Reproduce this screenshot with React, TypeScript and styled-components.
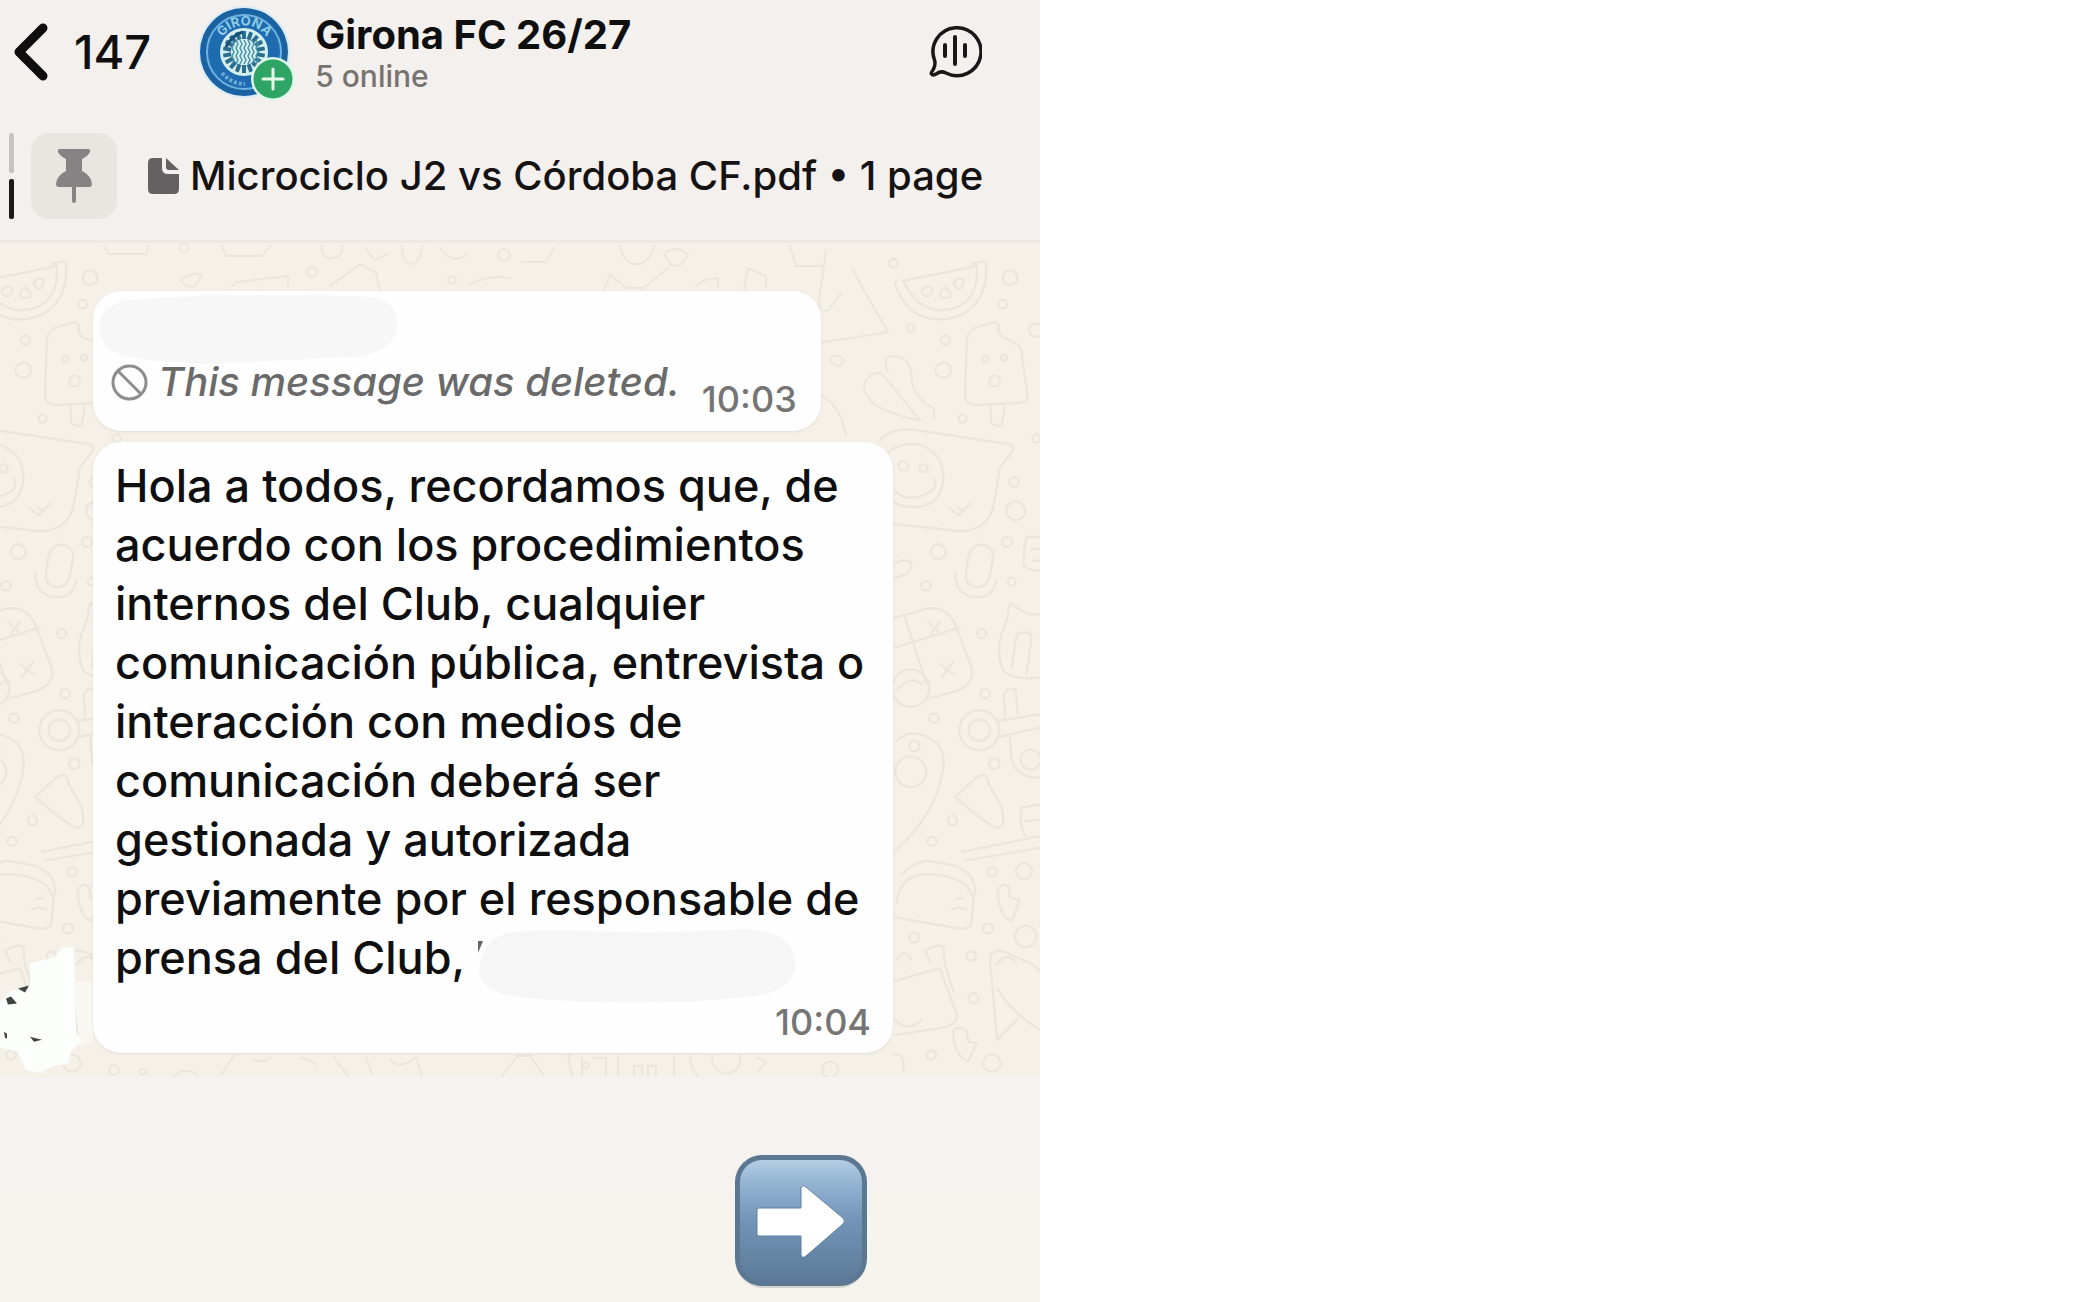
import React from "react";
import styled, { createGlobalStyle } from "styled-components";

const GlobalStyle = createGlobalStyle`
  *, *::before, *::after { box-sizing: border-box; }
  body { margin: 0; background: #fff; font-family: Inter, "Liberation Sans", sans-serif; color: #0f0f0f; }
  button { font: inherit; color: inherit; background: none; border: 0; padding: 0; cursor: pointer; }
  h1, p { margin: 0; }
  svg { display: block; flex: none; }
`;

const Screen = styled.main`
  display: flex;
  flex-direction: column;
  width: 50%;
  min-height: 100vh;
  background: #f5f2ee;
`;

const Header = styled.header`
  display: flex;
  align-items: center;
  padding: 3px 58px 9px 12px;
  background: #f3f0ed;
`;

const BackButton = styled.button`
  display: flex;
  align-items: center;
  gap: 22px;
  font-size: 47px;
  line-height: 56px;
  font-weight: 500;
`;

const Avatar = styled.div`
  margin-left: 48px;
`;

const Heading = styled.div`
  flex: 1;
  margin-left: 20px;
  padding-top: 4px;
`;

const Title = styled.h1`
  font-size: 40px;
  line-height: 44px;
  font-weight: 700;
`;

const Presence = styled.p`
  font-size: 30px;
  line-height: 38px;
  font-weight: 500;
  color: #77736f;
`;

const PinnedBar = styled.section`
  display: flex;
  align-items: center;
  padding: 23px 0 21px 9px;
  background: #f4f0ee;
  border-bottom: 3px solid #ece8e3;
`;

const PinSteps = styled.div`
  display: flex;
  flex-direction: column;
  gap: 6px;
`;

const PinStep = styled.span<{ $active?: boolean }>`
  width: 5px;
  height: 40px;
  border-radius: 2px;
  background: ${(p) => (p.$active ? "#1c1917" : "#c6c3c0")};
`;

const PinTile = styled.div`
  display: grid;
  place-items: center;
  width: 86px;
  height: 86px;
  margin-left: 17px;
  border-radius: 18px;
  background: #e9e6e2;
`;

const PinnedLink = styled.a`
  display: flex;
  align-items: center;
  gap: 10px;
  margin-left: 30px;
  font-size: 40px;
  line-height: 48px;
  font-weight: 500;
  color: #141212;
  text-decoration: none;
  white-space: nowrap;
`;

const Chat = styled.section`
  position: relative;
  display: flex;
  flex-direction: column;
  align-items: flex-start;
  gap: 11px;
  padding: 48px 24px 24px 93px;
  background: #f5f1e9;
`;

const Wallpaper = styled.svg`
  position: absolute;
  inset: 0;
  width: 100%;
  height: 100%;
`;

const Bubble = styled.article`
  position: relative;
  display: flex;
  flex-direction: column;
  max-width: 800px;
  border-radius: 28px;
  background: #fefefe;
  box-shadow: 0 1px 3px rgba(120, 110, 90, 0.14);
`;

const DeletedBubble = styled(Bubble)`
  padding: 4px 24px 12px 18px;
`;

const TextBubble = styled(Bubble)`
  gap: 13px;
  padding: 14px 22px 11px;
`;

const DeletedRow = styled.div`
  display: flex;
  align-items: flex-start;
  gap: 22px;
  min-height: 66px;
`;

const DeletedLabel = styled.div`
  display: flex;
  align-items: center;
  gap: 10px;
`;

const DeletedText = styled.p`
  font-size: 40px;
  line-height: 58px;
  font-style: italic;
  font-weight: 500;
  color: #6a6a6a;
`;

const MessageText = styled.p`
  font-size: 45px;
  line-height: 59px;
  font-weight: 500;
`;

const Time = styled.time`
  align-self: flex-end;
  font-size: 36px;
  line-height: 40px;
  font-weight: 500;
  color: #757575;
`;

const Redacted = styled.svg`
  overflow: visible;
`;

const InlineRedacted = styled.svg`
  display: inline-block;
  vertical-align: middle;
  margin: -10px 0;
  overflow: visible;
`;

const Footer = styled.footer`
  display: flex;
  flex: 1;
  align-items: flex-end;
  justify-content: flex-end;
  padding: 64px 172px 14px;
  background: linear-gradient(#f5f3f0 0, #f5f2ef 50%, #f7f4ed 62%, #f6f3ee 100%);
`;

function Crest() {
  const spokes = Array.from({ length: 18 }, (_, i) => i * 20);
  return (
    <svg width="96" height="98" viewBox="0 -3 96 98" role="img" aria-label="Girona FC">
      <defs>
        <path id="crest-top" d="M19 46 A26.500 26.500 0 0 1 72 46" />
      </defs>
      <circle cx="45" cy="46" r="46" fill="#d9ecf6" />
      <circle cx="45" cy="46" r="44" fill="#1a62a2" />
      <circle cx="45" cy="46" r="37" fill="#1f6bb0" stroke="#6db4e0" strokeWidth="2" />
      <circle cx="45" cy="46" r="24" fill="#d6f0f0" />
      {spokes.map((a) => (
        <rect key={a} x="43" y="25" width="4" height="8" fill="#2b6e90" transform={`rotate(${a} 45 46)`} />
      ))}
      {[-12, -8, -4, 0, 4, 8, 12].map((d) => (
        <path key={d} d={`M${45 + d} 34 l2 4 l-2 4 l2 4 l-2 4 l2 4 l-2 4`} fill="none" stroke="#4a94aa" strokeWidth="1.500" />
      ))}
      <path d="M27 41 q6 -12 17 -15" fill="none" stroke="#1a527a" strokeWidth="3" />
      <text fontSize="13" fontWeight="700" fill="#8fcde6" fontFamily="Inter, sans-serif">
        <textPath href="#crest-top" startOffset="50%" textAnchor="middle">GIRONA</textPath>
      </text>
      <path d="M23 67 Q33 78 46 78" fill="none" stroke="#69acd8" strokeWidth="4" strokeDasharray="3 2" />
      <circle cx="74" cy="73" r="22" fill="#dff6ea" />
      <circle cx="74" cy="73" r="19.500" fill="#2ea564" />
      <path d="M64 73 H84 M74 63 V83" stroke="#e3fbe9" strokeWidth="3" strokeLinecap="round" />
    </svg>
  );
}

function DoodleColumn() {
  return (
    <g transform="translate(860 240) scale(.3333)">
      <path d="M130 122 L350 78 Q356 150 320 182 Q285 212 235 210 Q170 206 130 122 M110 122 Q100 128 112 150 Q150 238 240 238 Q330 235 365 160 Q382 120 378 72 Q378 62 362 65 L335 72" />
      <path d="M186 150 q16 -22 32 -2 q-6 22 -22 20 Q184 165 186 150 M240 165 q4 -30 22 -18 q16 14 6 24 q-22 8 -28 -6 M280 128 q14 -20 32 -8 q-2 24 -16 28 q-8 -6 -16 -20" />
      <circle cx="450" cy="113" r="22" /><circle cx="428" cy="192" r="13" /><circle cx="152" cy="263" r="12" />
      <circle cx="256" cy="300" r="14" /><circle cx="250" cy="390" r="23" /><circle cx="100" cy="70" r="13" />
      <circle cx="527" cy="270" r="20" /><circle cx="308" cy="535" r="12" /><circle cx="530" cy="594" r="12" />
      <path d="M320 310 Q318 268 360 258 L400 246 Q420 246 415 268 Q420 296 450 300 Q488 318 486 345 L502 460 Q505 486 480 488 L345 494 Q312 492 315 460 Z M393 500 L392 545 Q398 558 425 556 L434 500" />
      <circle cx="376" cy="357" r="9" /><circle cx="432" cy="352" r="9" /><circle cx="404" cy="422" r="16" />
      <path d="M60 600 Q90 562 160 568 L440 610 Q470 615 452 640 L420 680 L400 800 Q380 870 300 872 L100 850" />
      <path d="M80 640 Q115 605 175 612 Q250 635 250 712 Q245 800 160 800 Q120 800 95 780 M105 750 Q140 788 200 760 Q240 740 220 715" />
      <circle cx="130" cy="676" r="14" /><circle cx="190" cy="684" r="12" />
      <path d="M265 800 l30 24 l38 -36 M292 800 l18 12" />
      <circle cx="462" cy="725" r="14" /><circle cx="467" cy="811" r="28" /><circle cx="235" cy="933" r="22" />
      <circle cx="441" cy="905" r="15" /><circle cx="198" cy="1035" r="14" /><circle cx="455" cy="1023" r="12" />
      <path d="M325 950 Q335 910 368 912 Q402 920 400 950 L388 1010 Q380 1040 350 1040 Q312 1030 318 1000 Z M286 995 Q286 1068 350 1070 Q400 1070 410 1018 M106 965 Q156 950 155 976 Q145 1005 106 1010" />
      <path d="M540 890 L500 888 Q488 930 492 975 Q510 992 540 990 M515 925 h25 M520 960 h20" />
      <path d="M100 1132 L200 1104 Q260 1095 285 1150 L335 1280 Q345 1330 290 1350 L210 1372 M135 1130 L200 1330 M106 1220 L300 1160 M205 1145 l40 36 M240 1140 l-30 44 M240 1270 l42 32 M280 1262 l-36 50" />
      <path d="M450 1085 Q500 1130 540 1120 M450 1085 L440 1140 Q400 1220 430 1290 Q470 1320 540 1310 M470 1180 L455 1280 M470 1180 Q510 1165 515 1190 L500 1300" />
      <circle cx="152" cy="1342" r="56" /><path d="M110 1350 q40 -50 76 -20" />
      <circle cx="365" cy="1178" r="14" /><circle cx="375" cy="1358" r="14" /><circle cx="222" cy="1432" r="14" />
      <circle cx="358" cy="1468" r="60" /><circle cx="358" cy="1468" r="32" />
      <path d="M412 1440 L540 1420 M418 1488 L540 1460 M435 1430 L432 1360 Q440 1340 466 1345 L474 1420 M450 1490 L456 1560 Q470 1610 540 1610" />
      <circle cx="512" cy="1556" r="30" /><circle cx="403" cy="1568" r="16" />
      <path d="M110 1500 Q140 1470 180 1480 Q260 1500 250 1580 Q230 1720 106 1828" />
      <circle cx="152" cy="1592" r="46" /><circle cx="163" cy="1515" r="16" />
      <path d="M285 1668 L350 1608 Q380 1590 385 1625 L425 1700 Q440 1760 410 1760 Q380 1750 300 1680 Z" />
      <circle cx="278" cy="1738" r="14" /><circle cx="216" cy="1800" r="14" />
      <path d="M305 1832 L540 1785 M315 1858 L540 1820 M485 1700 Q475 1740 495 1785 M485 1700 L540 1690 M495 1740 L540 1735" />
      <path d="M110 1985 Q120 1890 220 1900 Q320 1905 340 1970 L335 2040 Q335 2065 300 2062 L106 2028 M125 1900 Q150 1870 200 1858 L290 1875 Q350 1900 345 1960 M275 2005 l20 -6 l25 6 M290 1972 h16" />
      <circle cx="397" cy="1892" r="14" /><circle cx="492" cy="1890" r="24" /><circle cx="384" cy="2062" r="15" />
      <circle cx="497" cy="2085" r="32" /><circle cx="163" cy="2088" r="15" /><circle cx="334" cy="2144" r="14" />
      <path d="M412 1950 Q430 1918 448 1938 L450 1970 L478 1975 Q470 2010 455 2038 Q420 2030 412 1950" />
      <path d="M106 2218 L240 2180 L290 2320 Q290 2350 250 2358 L106 2380 M210 2160 L195 2130 Q220 2108 250 2115 L255 2170 L280 2250 M110 2155 q24 -40 44 0 M106 2335 q40 40 80 0" />
      <path d="M390 2160 Q390 2120 430 2130 L520 2170 L540 2190 M390 2160 L412 2395 L475 2330 M412 2240 Q450 2310 540 2365 M410 2170 Q440 2130 465 2160" />
      <path d="M280 2365 Q300 2350 320 2370 L325 2400 L350 2405 L325 2460 Q280 2440 280 2365 M106 2440 Q135 2430 130 2490" />
      <circle cx="396" cy="2465" r="26" /><circle cx="214" cy="2440" r="14" /><circle cx="340" cy="2270" r="15" />
    </g>
  );
}

function ChatWallpaper() {
  return (
    <Wallpaper viewBox="0 243 1040 832" preserveAspectRatio="none" aria-hidden="true">
      <g fill="none" stroke="#ebe6dd" strokeWidth="7" strokeLinecap="round" strokeLinejoin="round">
        <DoodleColumn />
        <g transform="translate(-920 0)"><DoodleColumn /></g>
      </g>
      <g fill="none" stroke="#ebe6dd" strokeWidth="2" strokeLinecap="round" strokeLinejoin="round">
        <path d="M104 246 l4 8 h38 l3 -8 M222 246 l4 10 h36 l8 -10 M180 280 q10 -8 22 -6 l-6 12 q-10 2 -16 -6 M232 286 l4 -4 l52 -6 v10" />
        <path d="M322 246 q-2 12 10 12 q12 -2 10 -12 M330 286 l30 -22 l16 8 l4 18 M366 248 l8 12 l14 -6 M402 246 q0 18 10 18 q10 -4 10 -18 M440 248 q12 18 28 6 M470 284 q20 -10 40 -6" />
        <path d="M522 262 h24 l8 -14 M604 290 l6 -16 l16 14 h18 l24 -20 M620 246 q4 20 20 18 q12 -6 14 -18 M664 254 q10 -10 24 0 q-6 16 -18 10 z M696 286 q8 -8 22 -8 v10 M744 290 l4 -22 l18 8 v12 M790 246 l6 20 h28 M826 250 l-6 44 q-4 18 8 16 l14 -18 M852 268 l14 26 l22 38 l-66 10" />
        <circle cx="312" cy="272" r="5" /><circle cx="184" cy="248" r="4" /><circle cx="504" cy="255" r="6" /><circle cx="452" cy="280" r="4" />
        <path d="M822 396 q20 10 24 40 M830 360 q6 -10 14 0 q-4 12 -14 0 M866 380 q12 -14 20 -2 l34 42 q-24 -4 -46 -16 q-14 -14 -8 -24 M888 372 q-8 -18 10 -16 q14 4 14 26 q4 18 22 26 v10" />
        <path d="M174 1074 q12 -10 24 0 M222 1072 l12 -18 M254 1058 q10 4 16 -2 M300 1056 q10 2 16 6 M334 1056 l14 18 M366 1056 l6 16 M390 1058 q10 10 26 -2 l6 18 M502 1074 l16 -20 h12 l14 20 M568 1052 l4 22 M582 1056 v18 M594 1056 h12 v18 M618 1054 v20 M634 1074 v-10 h8 v10 M648 1074 v-10 h8 v10 M674 1054 v20 M690 1054 q0 12 8 20 M712 1054 q0 16 14 18 q16 -2 14 -18 M756 1056 l10 4 l-8 10" />
        <circle cx="114" cy="1068" r="5" /><circle cx="143" cy="1070" r="3" /><circle cx="586" cy="1064" r="3" /><circle cx="830" cy="1068" r="8" />
      </g>
      <path d="M74 980 H93 V1040 L80 1046 Z" fill="#f8f7f2" />
      <path d="M0 1000 L10 990 L30 984 L30 962 L54 956 L62 946 L74 946 L76 1030 L82 1040 L72 1048 L68 1062 L54 1064 L40 1071 L26 1068 L18 1050 L0 1046 Z" fill="#fbfefb" />
      <g fill="#3e4440">
        <path d="M18 987 l11 -3 l-4 7 z M8 1003 l-2 -6 l5 -2 l6 7 z M30 1035 l12 3 l-8 2 z M4 1030 l3 2 v5 l-2 -1 z" />
      </g>
    </Wallpaper>
  );
}

export default function App() {
  return (
    <>
      <GlobalStyle />
      <Screen>
        <Header>
          <BackButton aria-label="Back, 147 chats">
            <svg width="40" height="60" viewBox="0 0 40 60">
              <path d="M31 6 L7 30 L31 54" fill="none" stroke="#0f0d0d" strokeWidth="9" strokeLinecap="round" strokeLinejoin="round" />
            </svg>
            147
          </BackButton>
          <Avatar><Crest /></Avatar>
          <Heading>
            <Title>Girona FC 26/27</Title>
            <Presence>5 online</Presence>
          </Heading>
          <button aria-label="Voice chat">
            <svg width="56" height="56" viewBox="0 2 56 56" fill="none" stroke="#1a1718" strokeWidth="3.500" strokeLinecap="round" strokeLinejoin="round">
              <path d="M8.500 38 A24 24 0 1 1 20 51 Q15 48.500 11 51.500 Q7 54 5.500 52 Q4.500 51 7 48 Q10 43 8.500 38 Z" />
              <path d="M19 23 V34 M29 15 V42 M39 23 V34" strokeWidth="4" />
            </svg>
          </button>
        </Header>
        <PinnedBar>
          <PinSteps>
            <PinStep />
            <PinStep $active />
          </PinSteps>
          <PinTile>
            <svg width="38" height="56" viewBox="0 0 38 56" fill="#878384">
              <path d="M5 1 H33 Q36 1 35 4 Q33 8 27 11 V23 Q36 27 37 36 Q37 39 34 39 H4 Q1 39 1 36 Q2 27 11 23 V11 Q5 8 3 4 Q2 1 5 1 Z" />
              <path d="M17 39 H21 V52 Q21 55 19 55 Q17 55 17 52 Z" />
            </svg>
          </PinTile>
          <PinnedLink href="#pinned">
            <svg width="33" height="38" viewBox="0 0 33 38" fill="#656061">
              <path d="M6 1 H15 V11 Q15 17 21 17 H32 V32 Q32 37 27 37 H6 Q1 37 1 32 V6 Q1 1 6 1 Z" />
              <path d="M19 1 L32 13 H22 Q19 13 19 10 Z" />
            </svg>
            Microciclo J2 vs Córdoba CF.pdf • 1 page
          </PinnedLink>
        </PinnedBar>
        <Chat>
          <ChatWallpaper />
          <DeletedBubble>
            <Redacted width="302" height="58" viewBox="0 0 302 58" aria-hidden="true">
              <path d="M24 6 Q120 -4 274 2 Q304 8 300 32 Q298 58 254 62 L130 68 Q40 70 10 54 Q-10 20 24 6 Z" fill="#f7f7f7" transform="translate(-14 0)" />
            </Redacted>
            <DeletedRow>
              <DeletedLabel>
                <svg width="37" height="37" viewBox="0 0 37 37" fill="none" stroke="#8d8d8d" strokeWidth="3">
                  <circle cx="18.500" cy="18.500" r="16.500" />
                  <path d="M7 7 L30 30" />
                </svg>
                <DeletedText>This message was deleted.</DeletedText>
              </DeletedLabel>
              <Time>10:03</Time>
            </DeletedRow>
          </DeletedBubble>
          <TextBubble>
            <MessageText>
              Hola a todos, recordamos que, de acuerdo con los procedimientos internos del Club, cualquier
              comunicación pública, entrevista o interacción con medios de comunicación deberá ser gestionada y
              autorizada previamente por el responsable de prensa del Club,{" "}
              <InlineRedacted width="318" height="74" viewBox="0 -4 318 74" aria-hidden="true">
                <path d="M1 12 H6 L1 24 Z" fill="#666" />
                <path d="M30 4 Q60 -1 170 4 L270 0 Q318 2 318 36 Q316 64 270 68 Q180 78 60 70 Q2 66 2 42 Q4 12 30 4 Z" fill="#f6f6f6" />
              </InlineRedacted>
            </MessageText>
            <Time>10:04</Time>
          </TextBubble>
        </Chat>
        <Footer>
          <button aria-label="Next">
            <svg width="134" height="134" viewBox="0 0 134 134">
              <defs>
                <linearGradient id="key-face" x1="0" y1="0" x2="0" y2="1">
                  <stop offset="0" stopColor="#b4cde3" />
                  <stop offset=".22" stopColor="#8fb0cf" />
                  <stop offset=".5" stopColor="#7394b6" />
                  <stop offset="1" stopColor="#5c7a98" />
                </linearGradient>
              </defs>
              <rect x="2" y="4" width="130" height="130" rx="27" fill="#d6d4d2" />
              <rect x="1" y="1" width="132" height="131" rx="27" fill="#5b7792" />
              <rect x="6" y="6" width="122" height="122" rx="22" fill="url(#key-face)" />
              <path d="M25 54 H67 V34 Q68 30 72 33 L109 64 Q112 67 109 70 L72 102 Q68 105 67 101 V82 H25 Q23 82 23 80 V56 Q23 54 25 54 Z" fill="#fff" stroke="#5f81a3" strokeWidth="1" />
            </svg>
          </button>
        </Footer>
      </Screen>
    </>
  );
}
